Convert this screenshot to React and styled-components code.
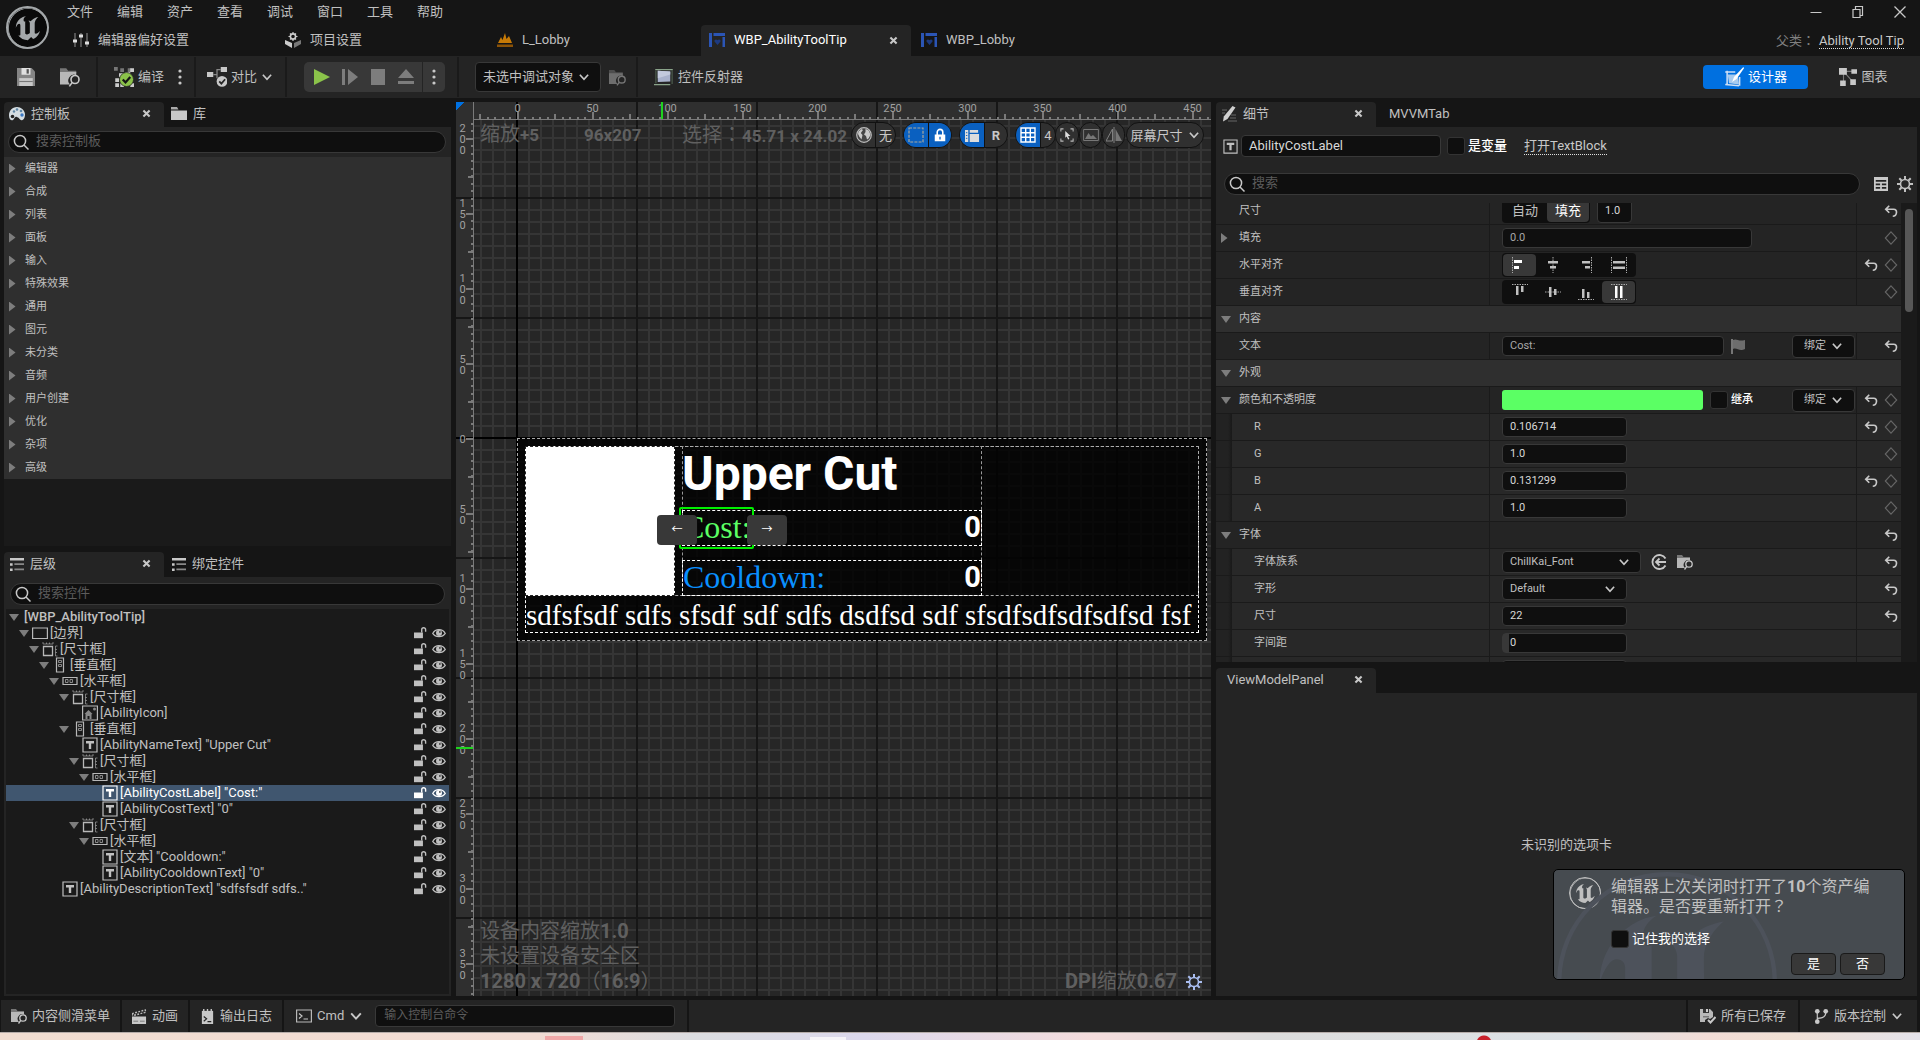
import React from 'react';

import styled, { createGlobalStyle, css } from 'styled-components';
import { SiUnrealengine } from 'react-icons/si';


const GlobalStyle = createGlobalStyle`
    *{
        box-sizing:border-box;
    }
    body{
        margin:0;
        background:#151515;
        color:#c0c0c0;
        font:13px/16px Roboto, "Noto Sans CJK SC", sans-serif;
        overflow:hidden;
    }
    button, input, select{
        font:inherit;
        color:inherit;
        margin:0;
        padding:0;
        border:0;
        background:none;
        outline:none;
    }
    button{
        white-space:nowrap;
    }
    svg{
        display:block;
        flex:none;
    }
`;

/* ---------- icons ---------- */

const shapes = {
    sliders: <g stroke="#aaa" strokeWidth="1.4"><path d="M2 1v14M8 1v14M14 1v14" opacity=".6"/><path d="M0 9h4M6 4h4M12 11h4" stroke="#ddd" strokeWidth="3"/></g>,
    project: <><path d="M0 8l7 3v5l-7-4z" fill="#ccc"/><path d="M16 8l-7 3v5l7-4z" fill="#777"/><circle cx="8" cy="4.5" r="2.6" fill="none" stroke="#ccc" strokeWidth="1.6"/><path d="M8 0v2M8 7v2M3.500 4.500h2M10.500 4.500h2M5 1.500l1.200 1.200M11 1.500L9.800 2.700M5 7.500l1.200-1.200M11 7.500L9.800 6.300" stroke="#ccc" strokeWidth="1.200"/></>,
    level: <><path d="M1 11L4 5l1.500 3L8 1l1.500 6L12 4l3 7z" fill="#c77a06"/><path d="M0 12.500h16V15H0z" fill="#8a5207"/></>,
    widget: <g fill="#2b55b5"><path d="M0 1h3v14H0zM4.500 1H16v3H4.500zM13.500 5H16v10h-2.500z"/><path d="M8.500 13L5.500 9.500c-.6-1.500 1.500-3 3-1.200 1.500-1.800 3.600-.3 3 1.200z" fill="#1d3a80"/></g>,
    save: <><path d="M0 0h13l3 3v13H0z" fill="#858585"/><path d="M4 0h8v6H4z" fill="#e0e0e0"/><path d="M8.500 1h2v4h-2z" fill="#555"/><path d="M2 9h12v7H2z" fill="#c8c8c8"/><path d="M2 12h12" stroke="#777"/></>,
    browse: <><path d="M0 1h5l1.500 2H13v2H0z" fill="#777"/><path d="M0 4h13v2.500a4.600 4.600 0 0 0-5 7.500H0z" fill="#b8b8b8"/><circle cx="12" cy="10" r="3.200" fill="none" stroke="#c8c8c8" strokeWidth="1.300"/><path d="M9.800 12.300L7.500 15.500" stroke="#c8c8c8" strokeWidth="1.300"/></>,
    compile: <><path d="M0 0h3v3H0zM5 1h3v3H5zM11 1h3v3h-3z" fill="#777"/><path d="M13 1h3v3h-3zM9 4h4v3H9zM1 9h3v3H1zM1 13h3v3H1zM5 13h3v3H5zM13 13h3v3h-3zM4 5h4v3H4z" fill="#ccc"/><circle cx="10" cy="10" r="5.600" fill="#8bc24a" stroke="#242424" strokeWidth=".6"/><path d="M7 10l2.200 2.300L13 8" fill="none" stroke="#151515" strokeWidth="1.800"/></>,
    diff: <><path d="M0 4h5v4H0zM11 0h5v4h-5z" fill="#c8c8c8"/><path d="M5 6h3V2h3M8 6v3" fill="none" stroke="#888"/><circle cx="12" cy="11.500" r="4.300" fill="#c8c8c8"/><path d="M9.800 11.500l1.700 1.800 3-3.500" fill="none" stroke="#242424" strokeWidth="1.400"/></>,
    play: <path d="M0 0l16 8-16 8z" fill="#8bc34a"/>,
    step: <path d="M0 0h3v16H0zM6 0l10 8-10 8z" fill="#7d7d7d"/>,
    stop: <path d="M1 0h14v16H1z" fill="#7d7d7d"/>,
    eject: <path d="M8 0l8 9H0zM0 12h16v3H0z" fill="#7d7d7d"/>,
    dots: <g fill="#c8c8c8"><circle cx="8" cy="2" r="1.600"/><circle cx="8" cy="8" r="1.600"/><circle cx="8" cy="14" r="1.600"/></g>,
    chevron: <path d="M2.500 5l5.500 6 5.500-6" fill="none" stroke="#c8c8c8" strokeWidth="2.200"/>,
    reflector: <><path d="M1 2h14M0 14h13" fill="none" stroke="#8aa48a"/><path d="M3 3l10 .5v8L3 12z" fill="#a9b2cc"/><path d="M3 3l10 .5V6L3 9z" fill="#c3cadd"/><path d="M14.500 2.500v11M1.500 3v10" stroke="#4b5a4b"/></>,
    designer: <><path d="M1 4h8M2.500 3v11M1 14l11 1M12.500 8v7" stroke="#cfe0f5" strokeWidth="1.200"/><path d="M3 6l8 0 1 8-8-1z" fill="#dfe9f5" opacity=".75"/><path d="M15.500 0L8 8l-1.500 4L10 9.500 16 1z" fill="#fff"/></>,
    graph: <><path d="M4 3h9M4 3l9 10M4 3v10" stroke="#777"/><path d="M0 0h7v6H0zM11 1h5v4h-5zM1 11h5v5H1zM10 10h5v5h-5z" fill="#c8c8c8"/></>,
    palette: <><path d="M8 1C3 1 0 5 0 9.500 0 13 2 15 4 14s1-4 4-3 3 4 5.500 3 2.500-5 2.500-6C15.500 4 12 1 8 1z" fill="#d4dde2"/><g fill="#5f86a5"><circle cx="8" cy="3.500" r="1.300"/><circle cx="12" cy="5" r="1.300"/><circle cx="5" cy="5.500" r="1.200"/></g><circle cx="13" cy="9" r="1.700" fill="#3b78c4"/><circle cx="3.500" cy="10.500" r="1.800" fill="#242424"/></>,
    folder: <><path d="M0 1h6l1.500 2.500H0z" fill="#aaa"/><path d="M0 4.500h16V14H0z" fill="#c8c8c8"/></>,
    search: <g fill="none" stroke="#c8c8c8" strokeWidth="1.500"><circle cx="7" cy="7" r="5.600"/><path d="M11 11l4.500 4.500"/></g>,
    list: <><path d="M0 1h16v3H0zM0 7h3v3H0zM0 13h3v3H0z" fill="#c8c8c8"/><path d="M5 7h11v2H5zM5 13h11v2H5z" fill="#888"/></>,
    close: <path d="M3.500 3.500l9 9M12.500 3.500l-9 9" stroke="#c8c8c8" strokeWidth="3"/>,
    border: <path d="M.6 3h14.800v10.500H.6z" fill="none" stroke="#b8b8b8" strokeWidth="1.200"/>,
    sizebox: <g fill="none" stroke="#b8b8b8"><path d="M1.500 5.500h9v9h-9z" strokeWidth="1.300"/><path d="M1 1v2h10V1M4.500 1.500v1.500M7.500 1.500v1.500M15.500 5h-2v10h2M15 8.500h-1.500M15 11.500h-1.500" opacity=".6"/></g>,
    vbox: <g fill="none" stroke="#b8b8b8"><path d="M4.500 1h7v14h-7z" strokeWidth="1.200"/><path d="M6.500 3.500h3v2h-3zM6.500 7.500h3v2h-3z" opacity=".7"/></g>,
    hbox: <g fill="none" stroke="#b8b8b8"><path d="M1 4.500h14v7H1z" strokeWidth="1.200"/><path d="M3.500 6.500h2.500v3H3.500zM8 6.500h2.500v3H8z" opacity=".7"/></g>,
    image: <><path d="M.6 1h14.800v14H.6z" fill="none" stroke="#b8b8b8" strokeWidth="1.200"/><path d="M2.500 9L6.500 5l4 4-1 .2V14H7.500v-3h-2v3h-2V9z" fill="#888"/><circle cx="12.500" cy="4" r="1.500" fill="#888"/></>,
    text: <><path d="M1 1h14v14H1z" fill="none" stroke="currentColor" strokeWidth="1.200"/><path d="M4 4h8v2.500H9.200V12H6.800V6.500H4z" fill="currentColor"/></>,
    lock: <><path d="M0 8h11v7H0z" fill="currentColor"/><path d="M9.500 8V4.500a2.400 2.400 0 0 1 4.800 0V7" fill="none" stroke="currentColor" strokeWidth="1.700"/></>,
    eye: <><path d="M.8 8.500C4 2.800 12 2.800 15.200 8.500 12 13.500 4 13.500.8 8.500z" fill="none" stroke="currentColor" strokeWidth="1.400"/><circle cx="8" cy="8" r="3.400" fill="currentColor"/><circle cx="9" cy="6.800" r="1" fill="#333"/></>,
    globe: <><circle cx="8" cy="8" r="7.300" fill="#454545" stroke="#bbb" strokeWidth="1.200"/><path d="M2.500 4.500L5.500 2l1.500 1L4.800 6l1.700 2-1 4.500L3.500 10 2 7zM9.500 1.800l3.500 2L14.500 8l-2 3.500-1.500 1-1-3.500-2-1.500 1.500-2.500z" fill="#c8c8c8"/></>,
    dashed: <path d="M1 1h14v14H1z" fill="none" stroke="#a9a79c" strokeWidth="1.200" strokeDasharray="3 1.200"/>,
    locked: <><path d="M2 7.500h12V15H2z" fill="#fff"/><path d="M4.800 8V4.800a3.200 3.200 0 0 1 6.400 0V8" fill="none" stroke="#fff" strokeWidth="1.800"/><path d="M8 10v3" stroke="#0a60c0" strokeWidth="1.500"/></>,
    anchors: <g fill="#ddd"><path d="M0 2h3.500v13H0zM5 2h9v3H5zM5 6.500h10V15H5z"/><path d="M1 5h1.500M1 8h1.500M1 11h1.500" stroke="#0a60c0"/></g>,
    grid: <path d="M1 1h14v14H1zM5.700 1v14M10.300 1v14M1 5.700h14M1 10.300h14" fill="none" stroke="#fff" strokeWidth="1.400"/>,
    pick: <><path d="M1 4V1h3M12 1h3v3M15 12v3h-3M4 15H1v-3" fill="none" stroke="#b8b8b8" strokeWidth="1.200"/><path d="M6 3.500l6 5.500H9.200l1.500 3.500-1.500.7-1.500-3.500L6 11.200z" fill="#ddd"/></>,
    picture: <><path d="M.6 2.500h14.800v11H.6z" fill="none" stroke="#777"/><path d="M2 12l3.500-6L8 9.500 10 8l4 4z" fill="#777"/></>,
    flip: <><path d="M6.500 2v12H0zM8 0v16" fill="none" stroke="#808080"/><path d="M9.500 2v12H16z" fill="#777"/></>,
    gear: <><circle cx="8" cy="8" r="4.500" fill="none" stroke="currentColor" strokeWidth="1.600"/><path d="M8 0v3M8 13v3M0 8h3M13 8h3M2.300 2.300l2.200 2.200M11.500 11.500l2.200 2.200M13.700 2.300l-2.200 2.200M4.500 11.500l-2.200 2.200" stroke="currentColor" strokeWidth="2"/></>,
    pencil: <><path d="M1 4h5M1 7h3M9 12h6M7 15h9M10 9h5" stroke="#666"/><path d="M11.500 0l3 1.500-8 11.500-4.500 2.500.8-5z" fill="#d0d0d0"/></>,
    table: <><path d="M0 0h16v16H0z" fill="#c8c8c8"/><path d="M2 4.500h12M2 8.500h5M9 8.500h5M2 12.500h5M9 12.500h5" stroke="#242424" strokeWidth="2"/></>,
    undo: <path d="M6 2L2 6l4 4M2.500 6H11c5 0 4 8-1 8" fill="none" stroke="#c8c8c8" strokeWidth="1.900"/>,
    diamond: <path d="M8 1l6.500 7L8 15 1.500 8z" fill="none" stroke="#666" strokeWidth="1.300"/>,
    flag: <><path d="M1 1v15" stroke="#c8c8c8"/><path d="M2 2c4-2 5 2 12 0v9c-6 3-8-2-12 0z" fill="#6d6d6d"/></>,
    useAsset: <g fill="none" stroke="#c8c8c8" strokeWidth="1.800"><path d="M14.500 4.500a7 7 0 1 0 0 7"/><path d="M15 8H5M8.500 4.500L5 8l3.500 3.500"/></g>,
    clap: <><path d="M0 5l14-4 .7 2.500L1 7z" fill="none" stroke="#bbb" strokeDasharray="2 1.500" strokeWidth="1.500"/><path d="M0 8h15v8H0z" fill="#c8c8c8"/><path d="M1.500 13h5M8.500 13h5" stroke="#777"/></>,
    log: <><path d="M2 2h12v14H2z" fill="#c8c8c8"/><path d="M4 0v4M8 0v4M12 0v4" stroke="#c8c8c8" strokeWidth="1.500"/><path d="M4 8l3 2.500L4 13M8 13.500h4" fill="none" stroke="#242424" strokeWidth="1.300"/></>,
    cmd: <><path d="M.6 2h14.800v12H.6z" fill="none" stroke="#b8b8b8" strokeWidth="1.200"/><path d="M3 5.500L6 8l-3 2.500M7.500 11H12" fill="none" stroke="#c8c8c8" strokeWidth="1.200"/></>,
    saved: <><path d="M0 1h10l3 3v5l-3 2-2-1-3 2v2H0z" fill="#b8b8b8"/><path d="M3 1h6v4H3z" fill="#333"/><path d="M6 1h2v3H6z" fill="#ccc"/><path d="M3 8h6v1.500H3z" fill="#777"/><path d="M8 12l2.500 2.500L15.500 9" fill="none" stroke="#c8c8c8" strokeWidth="2"/></>,
    branch: <><path d="M3.500 3v10M3.500 10c5 0 9-1 9-6" fill="none" stroke="#c8c8c8" strokeWidth="1.200"/><g fill="#c8c8c8"><circle cx="3.500" cy="2.500" r="2.500"/><circle cx="12.500" cy="2.500" r="2.500"/><circle cx="3.500" cy="13.500" r="2.500"/></g></>,
    min: <path d="M2.500 8.500h11" stroke="#c8c8c8"/>,
    restore: <path d="M3 5.500h7v8H3zM5.500 5V2.500h7v9H10" fill="none" stroke="#c8c8c8" strokeWidth="1.200"/>,
    exit: <path d="M2.500 2.500l11 11M13.500 2.500l-11 11" stroke="#c8c8c8" strokeWidth="1.300"/>,
    hLeft: <><path d="M.5 0v16" stroke="#aaa" strokeDasharray="1.500 1"/><path d="M2 3h8v3H2zM2 9h5v3H2z" fill="currentColor"/></>,
    hCenter: <><path d="M8 0v16" stroke="#aaa" strokeDasharray="1.500 1"/><path d="M3 4h10v2.500H3zM5 9h6v2.500H5z" fill="currentColor"/></>,
    hRight: <><path d="M13.500 0v16" stroke="#aaa" strokeDasharray="1.500 1"/><path d="M4 4h8v2.500H4zM7 9h5v2.500H7z" fill="currentColor"/></>,
    hFill: <><path d="M.5 0v16M15.500 0v16" stroke="#aaa" strokeDasharray="1.500 1"/><path d="M2 4h12v2.500H2zM2 9.500h12V12H2z" fill="currentColor"/></>,
    vTop: <><path d="M0 .5h16" stroke="#aaa" strokeDasharray="1.500 1"/><path d="M4 2h2.500v9H4zM9 2h2.500v6H9z" fill="currentColor"/></>,
    vCenter: <><path d="M0 8h16" stroke="#aaa" strokeDasharray="1.500 1"/><path d="M4 3h2.500v10H4zM9 5h2.500v6H9z" fill="currentColor"/></>,
    vBottom: <><path d="M0 15.500h16" stroke="#aaa" strokeDasharray="1.500 1"/><path d="M4 5h2.500v9H4zM9 8h2.500v6H9z" fill="currentColor"/></>,
    vFill: <><path d="M0 .5h16M0 15.500h16" stroke="#aaa" strokeDasharray="1.500 1"/><path d="M4 2h2.500v12H4zM9 2h2.500v12H9z" fill="currentColor"/></>,
};

function Icon({name, size = 16}){
    return <svg width={size} height={size} viewBox="0 0 16 16" aria-hidden="true">{shapes[name]}</svg>;
}

const Arrow = styled.span`
    flex:none;
    width:10px;
    height:10px;
    background:#7d7d7d;
    clip-path:${p => p.$open ? 'polygon(0 20%, 100% 20%, 50% 90%)' : 'polygon(0 0, 65% 50%, 0 100%)'};
    visibility:${p => p.$hidden ? 'hidden' : 'visible'};
`;

/* full-width punctuation sits in the middle of its cell in the TC face */
const Wide = styled.span`
    font-family:"Noto Sans CJK TC", sans-serif;
`;

const CloseMark = styled.span`
    margin-left:auto;
`;

/* ---------- window ---------- */

const Window = styled.div`
    height:100vh;
    display:flex;
    flex-direction:column;
`;

const TitleBar = styled.header`
    display:flex;
    height:56px;
    flex:none;
`;

const LogoBox = styled.div`
    width:65px;
    padding:6px;
`;

const Logo = styled.div`
    display:grid;
    place-items:center;
    flex:none;
    width:${p => p.$size}px;
    height:${p => p.$size}px;
    border:${p => p.$ring}px solid ${p => p.$color};
    border-radius:50%;
    background:${p => p.$bg};
    color:${p => p.$color};
`;

const TitleMain = styled.div`
    flex:1;
    display:flex;
    flex-direction:column;
    justify-content:space-between;
`;

const Menu = styled.nav`
    display:flex;
    height:24px;
    gap:24px;
    padding-left:2px;
    button{
        height:23px;
    }
`;

const DocTabs = styled.div`
    display:flex;
    gap:2px;
`;

const DocTab = styled.button`
    display:flex;
    align-items:center;
    width:210px;
    height:31px;
    padding:0 12px 1px 8px;
    gap:9px;
    border-radius:4px 4px 0 0;
    background:${p => p.$active ? '#242424' : 'none'};
    color:${p => p.$active ? '#fff' : '#c0c0c0'};
`;

const TitleSide = styled.div`
    display:flex;
    flex-direction:column;
    justify-content:space-between;
    align-items:flex-end;
    padding:4px 16px 7px 0;
`;

const WindowButtons = styled.div`
    display:flex;
    gap:26px;
    margin-right:-4px;
`;

const Parent = styled.div`
    color:#808080;
    a{
        margin-left:4px;
    }
`;

const DottedLink = styled.a`
    color:#c8c8c8;
    text-decoration:none;
    border-bottom:1px dotted #e0e0e0;
`;

/* ---------- toolbar ---------- */

const Toolbar = styled.div`
    display:flex;
    align-items:center;
    flex:none;
    height:42px;
    padding-right:4px;
    background:#242424;
`;

const ToolGroup = styled.div`
    display:flex;
    align-items:center;
    height:40px;
    gap:${p => p.$gap || 0}px;
    padding:${p => p.$pad};
    border-right:2px solid ${p => p.$last ? 'transparent' : '#1a1a1a'};
`;

const IconButton = styled.button`
    display:flex;
    align-items:center;
    gap:4px;
    opacity:${p => p.$dim ? .5 : 1};
`;

const PlayGroup = styled.div`
    display:flex;
    align-items:center;
    height:30px;
    width:141px;
    border-radius:5px;
    background:#383838;
    padding-left:10px;
    gap:12px;
    button:last-child{
        margin-left:-4px;
        border-left:1px solid #242424;
        width:23px;
        height:30px;
        padding-left:3px;
    }
`;

const SelectBox = styled.span`
    position:relative;
    display:inline-flex;
    width:${p => p.$w}px;
    height:${p => p.$h}px;
    select{
        appearance:none;
        width:100%;
        padding:0 7px;
        background:#0f0f0f;
        border:1px solid #383838;
        border-radius:4px;
    }
    svg{
        position:absolute;
        right:11px;
        top:calc(50% - 6px);
        pointer-events:none;
    }
`;

const ModeButtons = styled.div`
    display:flex;
    gap:3px;
    margin-left:auto;
`;

const ModeButton = styled.button`
    display:flex;
    align-items:center;
    justify-content:center;
    gap:4px;
    height:24px;
    width:105px;
    border-radius:4px;
    background:${p => p.$active ? '#0070e0' : 'none'};
    color:${p => p.$active ? '#fff' : '#c0c0c0'};
`;

/* ---------- docked panels ---------- */

const Main = styled.main`
    flex:1;
    min-height:0;
    display:flex;
    gap:5px;
    padding:4px 3px 4px 4px;
`;

const Column = styled.div`
    display:flex;
    flex-direction:column;
    gap:6px;
    width:${p => p.$w}px;
    flex:none;
`;

const Panel = styled.section`
    flex:${p => p.$grow || 1} 1 0;
    min-height:0;
    display:flex;
    flex-direction:column;
`;

const PanelTabs = styled.div`
    display:flex;
    height:25px;
    flex:none;
`;

const PanelTab = styled.button`
    display:flex;
    align-items:center;
    gap:6px;
    min-width:${p => p.$active ? 160 : 0}px;
    padding:0 12px 2px ${p => p.$pad || 5}px;
    border-radius:4px 4px 0 0;
    background:${p => p.$active ? '#242424' : 'none'};
`;

const PanelBody = styled.div`
    flex:1;
    min-height:0;
    display:flex;
    flex-direction:column;
    background:${p => p.$bg || '#242424'};
`;

const SearchStrip = styled.div`
    display:flex;
    align-items:center;
    gap:14px;
    flex:none;
    background:#242424;
    padding:${p => p.$pad};
`;

const StripIcons = styled.div`
    display:flex;
    align-items:center;
    gap:9px;
`;

const SearchBox = styled.label`
    flex:1;
    display:flex;
    align-items:center;
    gap:7px;
    height:22px;
    padding:0 4px;
    border:1px solid #383838;
    border-radius:11px;
    background:#0f0f0f;
    input{
        flex:1;
        height:20px;
        padding-bottom:4px;
    }
    input::placeholder{
        color:#5c5c5c;
    }
`;

const PaletteRow = styled.div`
    display:flex;
    align-items:center;
    gap:6px;
    height:23px;
    padding-left:5px;
    background:#2f2f2f;
    font-size:11px;
`;

const Tree = styled.div`
    flex:1;
    margin:0 2px 2px;
    background:#1a1a1a;
`;

const TreeRow = styled.div`
    display:flex;
    align-items:center;
    height:16px;
    padding:0 3px 0 ${p => p.$depth * 10 + 3}px;
    background:${p => p.$selected ? '#40566f' : 'none'};
    color:${p => p.$selected ? '#fff' : '#c0c0c0'};
    font-weight:${p => p.$root ? 500 : 400};
    white-space:nowrap;
`;

const TreeLabel = styled.span`
    margin-left:${p => p.$root ? 5 : 2}px;
    flex:1;
    line-height:15px;
    height:16px;
`;

const TreeIcon = styled.span`
    margin-left:3px;
`;

const TreeActions = styled.span`
    display:flex;
    gap:5px;
`;

/* ---------- designer viewport ---------- */

const Viewport = styled.section`
    flex:1;
    min-width:0;
    display:grid;
    grid-template:18px 1fr / 18px 1fr;
    background:#262626;
    overflow:hidden;
`;

const tick = '#7a7a7a';

const RulerTop = styled.div`
    grid-area:1 / 2;
    position:relative;
    display:flex;
    overflow:hidden;
    padding-left:6px;
    border-bottom:1px solid ${tick};
    font-size:11px;
    line-height:14px;
    color:#a0a0a0;
    background:
        linear-gradient(90deg, ${tick} 2px, transparent 2px) 13px 100% / 15px 2px repeat-x,
        linear-gradient(90deg, ${tick} 2px, transparent 2px) 5px 100% / 15px 2px repeat-x,
        linear-gradient(90deg, ${tick} 2px, transparent 2px) 5px 100% / 75px 5px repeat-x,
        linear-gradient(90deg, ${tick} 2px, transparent 2px) 43px 100% / 75px 7px repeat-x,
        linear-gradient(#000, #000) 42px 0 / 2px 100% no-repeat,
        linear-gradient(90deg, #161616 2px, transparent 2px) 42px 0 / 120px 100%,
        #2f2f2f;
    span{
        flex:none;
        width:75px;
        text-align:center;
    }
`;

const RulerLeft = styled.div`
    grid-area:1 / 1 / 3 / 2;
    position:relative;
    overflow:hidden;
    border-right:1px solid ${tick};
    font-size:11px;
    line-height:11px;
    color:#a0a0a0;
    background:
        linear-gradient(${tick} 2px, transparent 2px) 100% 6px / 2px 15px repeat-y,
        linear-gradient(${tick} 2px, transparent 2px) 100% 13px / 2px 15px repeat-y,
        linear-gradient(${tick} 2px, transparent 2px) 100% 74px / 5px 75px repeat-y,
        linear-gradient(${tick} 2px, transparent 2px) 100% 36px / 7px 75px repeat-y,
        linear-gradient(#000, #000) 0 335px / 100% 2px no-repeat,
        linear-gradient(#161616 2px, transparent 2px) 0 95px / 100% 120px,
        #2f2f2f;
    &:before{
        content:"";
        position:absolute;
        left:0;
        top:0;
        width:18px;
        height:18px;
        background:linear-gradient(135deg, #0070e0 6px, #2f2f2f 6px);
    }
    span{
        display:flex;
        flex-direction:column;
        justify-content:center;
        height:75px;
        width:13px;
        text-align:center;
    }
`;

const Marker = styled.i`
    position:absolute;
    background:#1ed31e;
    ${p => p.$vertical ? css`left:187px; top:0; width:2px; height:18px;` : css`top:645px; left:0; width:18px; height:2px;`}
`;

const Stage = styled.div`
    grid-area:2 / 2;
    position:relative;
    display:flex;
    flex-direction:column;
    justify-content:space-between;
    overflow:hidden;
    color:#606060;
    font-size:20px;
    line-height:25px;
    background:
        linear-gradient(#000, #000) 42px 0 / 2px 100% no-repeat,
        linear-gradient(#000, #000) 0 317px / 100% 2px no-repeat,
        linear-gradient(90deg, #161616 2px, transparent 2px) 42px 0 / 120px 100%,
        linear-gradient(#161616 2px, transparent 2px) 0 77px / 100% 120px,
        linear-gradient(90deg, #353535 2px, transparent 2px) 6px 0 / 12px 100%,
        linear-gradient(#353535 2px, transparent 2px) 0 5px / 100% 12px;
`;

const StageTop = styled.div`
    display:grid;
    grid-template-columns:104px 98px 169px 1fr;
    align-items:center;
    padding:1px 0 0 6px;
    white-space:nowrap;
    > b, > span b{
        font-size:17px;
    }
`;

const Pills = styled.div`
    display:flex;
    align-items:center;
    gap:7px;
    font-size:13px;
`;

const Pill = styled.div`
    display:flex;
    flex:none;
    height:26px;
    border:1px solid #111;
    border-radius:13px;
    overflow:hidden;
    background:#303030;
    color:#c8c8c8;
`;

const PillButton = styled.button`
    display:flex;
    align-items:center;
    justify-content:center;
    gap:5px;
    width:${p => p.$w}px;
    background:${p => p.$on ? '#0a60c0' : 'none'};
    & + &{
        border-left:1px solid #111;
    }
`;

const RoundPills = styled.div`
    display:flex;
    margin:0 -6px 0 -8px;
`;

const StageBottom = styled.div`
    display:flex;
    justify-content:space-between;
    align-items:flex-end;
    padding:0 9px 2px 6px;
`;

const Dpi = styled.div`
    display:flex;
    align-items:center;
    gap:9px;
    svg{
        color:#a9bdf0;
    }
`;

const dash = css`
    border:1px dashed ${p => p.$bright ? '#fff' : '#aaa'};
`;

/* the edited widget sits on the free canvas, at the ruler's origin */
const Tip = styled.div`
    position:absolute;
    left:43px;
    top:318px;
    width:690px;
    height:203px;
    padding:7px;
    background:rgba(0, 0, 0, .82);
    color:#fff;
    ${dash}
`;

const TipFrame = styled.div`
    height:187px;
    ${dash}
`;

const TipRow = styled.div`
    display:flex;
    gap:7px;
    margin:-1px;
    height:150px;
    ${dash}
`;

const TipIcon = styled.div`
    width:150px;
    margin:-1px 0 -1px -1px;
    background:#fff;
    border:1px dashed #222;
`;

const TipInfo = styled.div`
    width:300px;
    margin:-1px 0;
    border:0 dashed #999;
    border-width:0 1px;
`;

const TipName = styled.div`
    height:64px;
    margin-left:-1px;
    font-size:48px;
    line-height:56px;
    font-weight:700;
`;

const TipStat = styled.div`
    display:flex;
    justify-content:space-between;
    height:36px;
    margin:0 -1px 14px;
    color:${p => p.$color};
    font-family:"Liberation Serif", serif;
    font-size:32px;
    line-height:32px;
    ${dash}
    b{
        color:#fff;
        font-family:Roboto, sans-serif;
        font-size:29px;
    }
`;

const TipText = styled.p`
    margin:0;
    overflow:hidden;
    white-space:nowrap;
    font-family:"Liberation Serif", serif;
    font-size:29px;
    line-height:40px;
    height:37px;
`;

const Selection = styled.div`
    position:absolute;
    left:205px;
    top:387px;
    width:75px;
    height:42px;
    border:2px solid #00f000;
    border-radius:2px;
`;

const MoveButton = styled.button`
    position:absolute;
    left:${p => p.$left}px;
    top:395px;
    width:40px;
    height:30px;
    border-radius:4px;
    background:#383838;
    color:#fff;
    font-size:11px;
    line-height:30px;
`;

/* ---------- details ---------- */

const Field = styled.input`
    width:${p => p.$w}px;
    height:${p => p.$h || 20}px;
    padding:0 7px 2px;
    background:${p => p.$knob ? 'linear-gradient(90deg, #383838 6px, #0f0f0f 6px)' : '#0f0f0f'};
    border:1px solid #383838;
    border-radius:4px;
    color:${p => p.$dim ? '#a8a8a8' : '#d8d8d8'};
`;

const Check = styled.label`
    display:flex;
    align-items:center;
    gap:3px;
    color:#fff;
    font-weight:${p => p.$bold ? 500 : 400};
    input{
        appearance:none;
        width:18px;
        height:18px;
        background:#0f0f0f;
        border:1px solid #333;
        border-radius:3px;
    }
`;

const NameStrip = styled.div`
    display:flex;
    align-items:center;
    height:22px;
    gap:3px;
    margin:8px 8px 16px 7px;
    ${Check}{
        margin:0 14px 0 3px;
    }
`;

const Scroller = styled.div`
    flex:1;
    min-height:0;
    display:flex;
    overflow:hidden;
`;

const Rows = styled.div`
    flex:1;
    margin-top:-5px;
    font-size:11px;
`;

const Track = styled.div`
    width:16px;
    padding:6px 4px;
    background:#1a1a1a;
    &:before{
        content:"";
        display:block;
        height:103px;
        border-radius:4px;
        background:#575757;
    }
`;

const Row = styled.div`
    display:grid;
    grid-template-columns:274px 1fr 44px;
    height:27px;
    border-bottom:1px solid #1a1a1a;
    background:${p => p.$head ? '#2f2f2f' : p.$nested ? '#282828' : '#242424'};
`;

const Cell = styled.div`
    display:flex;
    align-items:center;
    border-right:1px solid ${p => p.$head ? 'transparent' : '#1a1a1a'};
`;

const NameCell = styled(Cell)`
    gap:8px;
    padding-left:5px;
    ${p => p.$nested && css`
        padding-left:20px;
        background:linear-gradient(90deg, #222 12px, #191919 16px, transparent 16px);
    `}
`;

const ValueCell = styled(Cell)`
    gap:7px;
    padding:0 1px 0 12px;
`;

const AssetButtons = styled.div`
    display:flex;
    gap:10px;
    padding-left:3px;
`;

const ResetCell = styled.div`
    display:flex;
    align-items:center;
    justify-content:flex-end;
    gap:6px;
    padding-right:3px;
`;

const Segments = styled.div`
    display:flex;
    height:24px;
    padding:1px;
    border-radius:4px;
    background:#0f0f0f;
`;

const Segment = styled.button`
    display:grid;
    place-items:center;
    width:${p => p.$w || 33}px;
    border-radius:4px;
    font-size:${p => p.$w ? 13 : 11}px;
    background:${p => p.$on ? '#383838' : 'none'};
    color:${p => p.$on ? '#fff' : '#c0c0c0'};
`;

const Swatch = styled.button`
    width:201px;
    height:20px;
    border-radius:3px;
    background:#5bff64;
`;

const BindButton = styled.button`
    display:flex;
    align-items:center;
    justify-content:center;
    gap:5px;
    width:63px;
    height:23px;
    margin-left:auto;
    background:#0f0f0f;
    border:1px solid #383838;
    border-radius:4px;
`;

const EmptyNote = styled.p`
    margin:auto;
`;

/* ---------- status bar ---------- */

const StatusBar = styled.footer`
    display:flex;
    flex:none;
    height:32px;
    padding:0 3px 0 1px;
    gap:2px;
`;

const StatusCell = styled.div`
    display:flex;
    align-items:center;
    gap:5px;
    padding:0 ${p => p.$padX || 10}px;
    background:#242424;
    flex:${p => p.$fill ? 1 : 'none'};
`;

const Console = styled.input`
    width:300px;
    height:22px;
    margin-left:7px;
    padding:0 8px 2px;
    background:#0f0f0f;
    border:1px solid #383838;
    border-radius:4px;
    font-size:12px;
    &::placeholder{
        color:#5c5c5c;
    }
`;

const Desktop = styled.div`
    flex:none;
    height:8px;
    border-top:1px solid #b5aca9;
    background:
        radial-gradient(circle at 1484px 10px, #c8202a 7px, transparent 8px),
        linear-gradient(#f0a8a8, #f0a8a8) 545px 3px / 38px 8px no-repeat,
        linear-gradient(#f6f4f8, #f6f4f8) 810px 4px / 36px 8px no-repeat,
        linear-gradient(90deg, #f0dcd0, #f2dcd4 28%, #dcdde0 36%, #dcd8ec 45%, #f4dcdc 57%, #dcdcdc 66%, #dde2e6 82%, #f2dcd6 89%, #f0e0d4 93%, #e4e2ea);
`;

/* ---------- notification ---------- */

const Toast = styled.aside`
    position:fixed;
    right:15px;
    bottom:60px;
    width:352px;
    height:111px;
    overflow:hidden;
    display:flex;
    gap:10px;
    padding:7px 19px 4px 15px;
    border:1px solid #000;
    border-radius:5px;
    background:#464b50;
`;

const Watermark = styled.span`
    position:absolute;
    left:3px;
    top:2px;
    color:#4d525b;
`;

const ToastBody = styled.div`
    position:relative;
    flex:1;
    display:flex;
    flex-direction:column;
    p{
        margin:0 0 14px;
        font-size:16px;
        line-height:19px;
    }
`;

const ToastButtons = styled.div`
    display:flex;
    justify-content:flex-end;
    gap:4px;
    margin-top:auto;
    button{
        width:45px;
        height:22px;
        border:1px solid #1a1a1a;
        border-radius:4px;
        background:#383838;
        color:#fff;
    }
`;

/* ---------- data ---------- */

const menu = ['文件', '编辑', '资产', '查看', '调试', '窗口', '工具', '帮助'];

const docs = [
    {icon: 'sliders', title: '编辑器偏好设置'},
    {icon: 'project', title: '项目设置'},
    {icon: 'level', title: 'L_Lobby'},
    {icon: 'widget', title: 'WBP_AbilityToolTip', active: true},
    {icon: 'widget', title: 'WBP_Lobby'},
];

const palette = ['编辑器', '合成', '列表', '面板', '输入', '特殊效果', '通用', '图元', '未分类', '音频', '用户创建', '优化', '杂项', '高级'];

const tree = [
    {d: 0, label: '[WBP_AbilityToolTip]', open: true},
    {d: 1, icon: 'border', label: '[边界]', open: true},
    {d: 2, icon: 'sizebox', label: '[尺寸框]', open: true},
    {d: 3, icon: 'vbox', label: '[垂直框]', open: true},
    {d: 4, icon: 'hbox', label: '[水平框]', open: true},
    {d: 5, icon: 'sizebox', label: '[尺寸框]', open: true},
    {d: 6, icon: 'image', label: '[AbilityIcon]'},
    {d: 5, icon: 'vbox', label: '[垂直框]', open: true},
    {d: 6, icon: 'text', label: '[AbilityNameText] "Upper Cut"'},
    {d: 6, icon: 'sizebox', label: '[尺寸框]', open: true},
    {d: 7, icon: 'hbox', label: '[水平框]', open: true},
    {d: 8, icon: 'text', label: '[AbilityCostLabel] "Cost:"', selected: true},
    {d: 8, icon: 'text', label: '[AbilityCostText] "0"'},
    {d: 6, icon: 'sizebox', label: '[尺寸框]', open: true},
    {d: 7, icon: 'hbox', label: '[水平框]', open: true},
    {d: 8, icon: 'text', label: '[文本] "Cooldown:"'},
    {d: 8, icon: 'text', label: '[AbilityCooldownText] "0"'},
    {d: 4, icon: 'text', label: '[AbilityDescriptionText] "sdfsfsdf sdfs.."'},
];

const topMarks = [0, 50, 100, 150, 200, 250, 300, 350, 400, 450];
const leftMarks = [200, 150, 100, 50, 0, 50, 100, 150, 200, 250, 300, 350];

/* ---------- parts ---------- */

function Search({placeholder}){
    return (
        <SearchBox>
            <Icon name="search"/>
            <input aria-label={placeholder} placeholder={placeholder}/>
        </SearchBox>
    );
}

function Close(){
    return <CloseMark><Icon name="close" size={11}/></CloseMark>;
}

function Select({value, w, h}){
    return (
        <SelectBox $w={w} $h={h}>
            <select aria-label={value}><option>{value}</option></select>
            <Icon name="chevron" size={12}/>
        </SelectBox>
    );
}

function Bind(){
    return <BindButton>绑定<Icon name="chevron" size={12}/></BindButton>;
}

function Detail({name, arrow, nested, head, undo, keyed, children}){
    return (
        <Row $head={head} $nested={nested}>
            <NameCell $head={head} $nested={nested}>
                <Arrow $open={arrow === 'open'} $hidden={!arrow}/>{name}
            </NameCell>
            <ValueCell $head={head}>{children}</ValueCell>
            <ResetCell>
                {undo && <Icon name="undo" size={14}/>}
                {keyed && <Icon name="diamond" size={14}/>}
            </ResetCell>
        </Row>
    );
}

function Align({icons, on, label}){
    return (
        <Segments role="group" aria-label={label}>
            {icons.map(name => <Segment key={name} $on={name === on} aria-label={name}><Icon name={name}/></Segment>)}
        </Segments>
    );
}

function Details(){
    return (
        <Panel $grow={560}>
            <PanelTabs>
                <PanelTab $active><Icon name="pencil"/>细节<Close/></PanelTab>
                <PanelTab $pad={13}>MVVMTab</PanelTab>
            </PanelTabs>
            <PanelBody>
                <NameStrip>
                    <Icon name="text" size={15}/>
                    <Field $w={200} $h={22} aria-label="名称" defaultValue="AbilityCostLabel"/>
                    <Check $bold><input type="checkbox"/>是变量</Check>
                    <DottedLink href="#">打开TextBlock</DottedLink>
                </NameStrip>
                <SearchStrip $pad="0 4px 8px 8px">
                    <Search placeholder="搜索"/>
                    <StripIcons><Icon name="table" size={14}/><Icon name="gear"/></StripIcons>
                </SearchStrip>
                <Scroller>
                    <Rows>
                        <Detail name="尺寸" undo>
                            <Segments><Segment $w={44}>自动</Segment><Segment $w={42} $on>填充</Segment></Segments>
                            <Field $w={35} $h={24} aria-label="尺寸" defaultValue="1.0"/>
                        </Detail>
                        <Detail name="填充" arrow="closed" keyed><Field $w={250} $dim aria-label="填充" defaultValue="0.0"/></Detail>
                        <Detail name="水平对齐" undo keyed><Align label="水平对齐" icons={['hLeft', 'hCenter', 'hRight', 'hFill']} on="hLeft"/></Detail>
                        <Detail name="垂直对齐" keyed><Align label="垂直对齐" icons={['vTop', 'vCenter', 'vBottom', 'vFill']} on="vFill"/></Detail>
                        <Detail name="内容" arrow="open" head/>
                        <Detail name="文本" undo><Field $w={222} $dim aria-label="文本" defaultValue="Cost:"/><Icon name="flag"/><Bind/></Detail>
                        <Detail name="外观" arrow="open" head/>
                        <Detail name="颜色和不透明度" arrow="open" undo keyed>
                            <Swatch aria-label="颜色"/>
                            <Check $bold><input type="checkbox"/>继承</Check>
                            <Bind/>
                        </Detail>
                        <Detail name="R" nested undo keyed><Field $w={125} aria-label="R" defaultValue="0.106714"/></Detail>
                        <Detail name="G" nested keyed><Field $w={125} aria-label="G" defaultValue="1.0"/></Detail>
                        <Detail name="B" nested undo keyed><Field $w={125} aria-label="B" defaultValue="0.131299"/></Detail>
                        <Detail name="A" nested keyed><Field $w={125} aria-label="A" defaultValue="1.0"/></Detail>
                        <Detail name="字体" arrow="open" undo/>
                        <Detail name="字体族系" nested undo>
                            <Select value="ChillKai_Font" w={139} h={22}/>
                            <AssetButtons>
                                <IconButton aria-label="使用"><Icon name="useAsset"/></IconButton>
                                <IconButton aria-label="浏览"><Icon name="browse"/></IconButton>
                            </AssetButtons>
                        </Detail>
                        <Detail name="字形" nested undo><Select value="Default" w={125} h={22}/></Detail>
                        <Detail name="尺寸" nested undo><Field $w={125} aria-label="字体尺寸" defaultValue="22"/></Detail>
                        <Detail name="字间距" nested><Field $w={125} $knob aria-label="字间距" defaultValue="0"/></Detail>
                        <Detail nested><Field $w={125} aria-label="倾斜量"/></Detail>
                    </Rows>
                    <Track/>
                </Scroller>
            </PanelBody>
        </Panel>
    );
}

function Designer(){
    return (
        <Viewport>
            <RulerTop>
                {topMarks.map(n => <span key={n}>{n}</span>)}
                <Marker $vertical/>
            </RulerTop>
            <RulerLeft>
                {leftMarks.map((n, i) => <span key={i}>{String(n).split('').map((c, j) => <div key={j}>{c}</div>)}</span>)}
                <Marker/>
            </RulerLeft>
            <Stage>
                <StageTop>
                    <span>缩放<b>+5</b></span>
                    <b>96x207</b>
                    <span>选择<Wide>：</Wide><b>45.71 x 24.02</b></span>
                    <Pills>
                        <Pill><PillButton $w={23} aria-label="本地化"><Icon name="globe"/></PillButton><PillButton $w={20}>无</PillButton></Pill>
                        <Pill><PillButton $w={24} $on aria-label="轮廓"><Icon name="dashed"/></PillButton><PillButton $w={23} $on aria-label="锁定"><Icon name="locked" size={14}/></PillButton></Pill>
                        <Pill><PillButton $w={24} $on aria-label="锚点"><Icon name="anchors" size={15}/></PillButton><PillButton $w={23}><b>R</b></PillButton></Pill>
                        <Pill><PillButton $w={24} $on aria-label="网格"><Icon name="grid"/></PillButton><PillButton $w={15}>4</PillButton></Pill>
                        <RoundPills>
                            <Pill><PillButton $w={22} aria-label="选取"><Icon name="pick" size={14}/></PillButton></Pill>
                            <Pill><PillButton $w={21} aria-label="图像"><Icon name="picture"/></PillButton></Pill>
                            <Pill><PillButton $w={21} aria-label="翻转"><Icon name="flip"/></PillButton></Pill>
                        </RoundPills>
                        <Pill><PillButton $w={76}>屏幕尺寸<Icon name="chevron" size={12}/></PillButton></Pill>
                    </Pills>
                </StageTop>
                <Tip>
                    <TipFrame $bright>
                        <TipRow>
                            <TipIcon/>
                            <TipInfo>
                                <TipName>Upper Cut</TipName>
                                <TipStat $bright $color="#5bff64">Cost:<b>0</b></TipStat>
                                <TipStat $bright $color="#0a90ff">Cooldown:<b>0</b></TipStat>
                            </TipInfo>
                        </TipRow>
                        <TipText>sdfsfsdf sdfs sfsdf sdf sdfs dsdfsd sdf sfsdfsdfsdfsdfsd fsf</TipText>
                    </TipFrame>
                </Tip>
                <Selection/>
                <MoveButton $left={183}>←</MoveButton>
                <MoveButton $left={273}>→</MoveButton>
                <StageBottom>
                    <div>
                        <div>设备内容缩放<b>1.0</b></div>
                        <div>未设置设备安全区</div>
                        <div><b>1280 x 720</b>（<b>16:9</b>）</div>
                    </div>
                    <Dpi><span><b>DPI</b>缩放<b>0.67</b></span><Icon name="gear"/></Dpi>
                </StageBottom>
            </Stage>
        </Viewport>
    );
}

export default function App(){
    return (
        <Window>
            <GlobalStyle/>
            <TitleBar>
                <LogoBox><Logo $size={43} $ring={2} $color="#a4a8aa" $bg="#0a0a0a"><SiUnrealengine size={40}/></Logo></LogoBox>
                <TitleMain>
                    <Menu>{menu.map(m => <button key={m}>{m}</button>)}</Menu>
                    <DocTabs>
                        {docs.map(doc => (
                            <DocTab key={doc.title} $active={doc.active}>
                                <Icon name={doc.icon}/>{doc.title}{doc.active && <Close/>}
                            </DocTab>
                        ))}
                    </DocTabs>
                </TitleMain>
                <TitleSide>
                    <WindowButtons><Icon name="min"/><Icon name="restore"/><Icon name="exit"/></WindowButtons>
                    <Parent>父类<Wide>：</Wide><DottedLink href="#">Ability Tool Tip</DottedLink></Parent>
                </TitleSide>
            </TitleBar>

            <Toolbar>
                <ToolGroup $gap={25} $pad="0 16px 0 17px">
                    <IconButton aria-label="保存"><Icon name="save" size={18}/></IconButton>
                    <IconButton aria-label="浏览"><Icon name="browse" size={20}/></IconButton>
                </ToolGroup>
                <ToolGroup $gap={8} $pad="0 6px 0 16px">
                    <IconButton><Icon name="compile" size={20}/>编译</IconButton>
                    <IconButton aria-label="选项"><Icon name="dots"/></IconButton>
                </ToolGroup>
                <ToolGroup $pad="0 12px 0 11px">
                    <IconButton><Icon name="diff" size={20}/>对比<Icon name="chevron" size={12}/></IconButton>
                </ToolGroup>
                <ToolGroup $pad="0 12px 0 17px">
                    <PlayGroup>
                        <IconButton aria-label="播放"><Icon name="play"/></IconButton>
                        <IconButton aria-label="步进"><Icon name="step"/></IconButton>
                        <IconButton aria-label="停止"><Icon name="stop"/></IconButton>
                        <IconButton aria-label="弹出"><Icon name="eject"/></IconButton>
                        <IconButton aria-label="更多"><Icon name="dots"/></IconButton>
                    </PlayGroup>
                </ToolGroup>
                <ToolGroup $gap={8} $pad="0 10px 0 16px">
                    <Select value="未选中调试对象" w={126} h={30}/>
                    <IconButton $dim aria-label="定位"><Icon name="browse" size={17}/></IconButton>
                </ToolGroup>
                <ToolGroup $last $pad="0 16px">
                    <IconButton><Icon name="reflector" size={20}/>控件反射器</IconButton>
                </ToolGroup>
                <ModeButtons>
                    <ModeButton $active><Icon name="designer" size={20}/>设计器</ModeButton>
                    <ModeButton><Icon name="graph" size={18}/>图表</ModeButton>
                </ModeButtons>
            </Toolbar>

            <Main>
                <Column $w={447}>
                    <Panel>
                        <PanelTabs>
                            <PanelTab $active><Icon name="palette"/>控制板<Close/></PanelTab>
                            <PanelTab $pad={7}><Icon name="folder"/>库</PanelTab>
                        </PanelTabs>
                        <PanelBody $bg="#1a1a1a">
                            <SearchStrip $pad="4px 5px 4px 4px"><Search placeholder="搜索控制板"/></SearchStrip>
                            {palette.map(p => <PaletteRow key={p}><Arrow/>{p}</PaletteRow>)}
                        </PanelBody>
                    </Panel>
                    <Panel>
                        <PanelTabs>
                            <PanelTab $active $pad={6}><Icon name="list" size={14}/>层级<Close/></PanelTab>
                            <PanelTab $pad={8}><Icon name="list" size={14}/>绑定控件</PanelTab>
                        </PanelTabs>
                        <PanelBody>
                            <SearchStrip $pad="6px 6px 4px"><Search placeholder="搜索控件"/></SearchStrip>
                            <Tree>
                                {tree.map((n, i) => (
                                    <TreeRow key={i} $depth={n.d} $root={n.d === 0} $selected={n.selected}>
                                        <Arrow $open $hidden={!n.open}/>
                                        {n.icon && <TreeIcon><Icon name={n.icon}/></TreeIcon>}
                                        <TreeLabel $root={n.d === 0}>{n.label}</TreeLabel>
                                        {n.d > 0 && <TreeActions><Icon name="lock" size={13}/><Icon name="eye" size={14}/></TreeActions>}
                                    </TreeRow>
                                ))}
                            </Tree>
                        </PanelBody>
                    </Panel>
                </Column>

                <Designer/>

                <Column $w={701}>
                    <Details/>
                    <Panel $grow={328}>
                        <PanelTabs>
                            <PanelTab $active $pad={11}>ViewModelPanel<Close/></PanelTab>
                        </PanelTabs>
                        <PanelBody><EmptyNote>未识别的选项卡</EmptyNote></PanelBody>
                    </Panel>
                </Column>
            </Main>

            <StatusBar>
                <StatusCell><Icon name="browse"/>内容侧滑菜单</StatusCell>
                <StatusCell><Icon name="clap" size={15}/>动画</StatusCell>
                <StatusCell><Icon name="log" size={15}/>输出日志</StatusCell>
                <StatusCell $padX={12}>
                    <Icon name="cmd"/>Cmd<Icon name="chevron" size={14}/>
                    <Console aria-label="控制台" placeholder="输入控制台命令"/>
                </StatusCell>
                <StatusCell $fill/>
                <StatusCell $padX={12}><Icon name="saved"/>所有已保存</StatusCell>
                <StatusCell $padX={14}><Icon name="branch" size={15}/>版本控制<Icon name="chevron" size={12}/></StatusCell>
            </StatusBar>
            <Desktop/>

            <Toast>
                <Watermark><SiUnrealengine size={220}/></Watermark>
                <Logo $size={32} $ring={1} $color="#c0c0c0" $bg="none"><SiUnrealengine size={31}/></Logo>
                <ToastBody>
                    <p>编辑器上次关闭时打开了<b>10</b>个资产编辑器。是否要重新打开<Wide>？</Wide></p>
                    <Check><input type="checkbox"/>记住我的选择</Check>
                    <ToastButtons><button>是</button><button>否</button></ToastButtons>
                </ToastBody>
            </Toast>
        </Window>
    );
}
